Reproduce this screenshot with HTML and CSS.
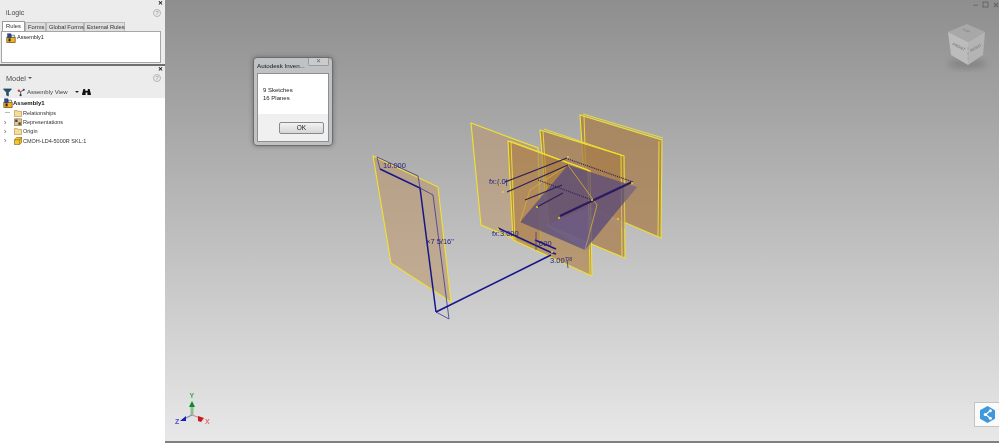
FILE: index.html
```html
<!DOCTYPE html>
<html lang="en">
<head>
<meta charset="utf-8">
<title>iLogic</title>
<link rel="stylesheet" href="styles.css">
</head>
<body>
<svg class="defs" width="0" height="0">
  <symbol id="asm" viewBox="0 0 12 12">
    <rect x="1" y="5" width="10" height="6.500" fill="#f2b21c" stroke="#5a4410" stroke-width=".8"/>
    <rect x="2" y="1" width="4" height="4.500" fill="#2c4a9c" stroke="#1c2c5c" stroke-width=".6"/>
    <rect x="6.500" y="2.500" width="3.500" height="3" fill="#e8e8e8" stroke="#333" stroke-width=".6"/>
    <rect x="3" y="6.500" width="2.500" height="3.500" fill="#222"/>
  </symbol>
  <symbol id="folder" viewBox="0 0 10 10">
    <path d="M.5 2h3.500l1 1h4.500v6.500h-9z" fill="#f6dc98" stroke="#b08a3c" stroke-width=".8"/>
  </symbol>
  <symbol id="rep" viewBox="0 0 10 10">
    <path d="M.5 1h9v8.500h-9z" fill="#e8c680" stroke="#806a3c" stroke-width=".8"/>
    <rect x="1.500" y="2" width="3" height="3" fill="#2c4a9c"/>
    <rect x="5.500" y="5.500" width="3" height="3" fill="#444"/>
  </symbol>
  <symbol id="part" viewBox="0 0 10 10">
    <path d="M.5 3.500l3-3h6v6.500l-2.500 2.500h-6.500z" fill="#f6c62c" stroke="#7a5a10" stroke-width=".8"/>
    <path d="M.5 3.500h6.500v5.500M7 3.500l2.500-3" fill="none" stroke="#7a5a10" stroke-width=".7"/>
  </symbol>
</svg>

<div class="app">
  <aside class="sidebar">
    <section class="ilogic">
      <div class="close-row"><span class="close">✕</span></div>
      <div class="title-row">
        <span class="ilogic-title">iLogic</span>
        <span class="help">?</span>
      </div>
      <div class="tabs">
        <span class="tab tab-active">Rules</span>
        <span class="tab tab-forms">Forms</span>
        <span class="tab tab-global">Global Forms</span>
        <span class="tab tab-external">External Rules</span>
      </div>
      <div class="rules-box">
        <svg class="ico"><use href="#asm"/></svg>
        <span>Assembly1</span>
      </div>
    </section>

    <section class="model">
      <div class="close-row"><span class="close">✕</span></div>
      <div class="title-row model-title-row">
        <span class="model-title">Model <i class="caret"></i></span>
        <span class="help">?</span>
      </div>
      <div class="toolbar">
        <svg class="filter" viewBox="0 0 10 10"><path d="M.5 1h9l-3.500 4v4l-2-1v-3z" fill="#1c5a7c" stroke="#123" stroke-width=".6"/></svg>
        <svg class="view-ico" viewBox="0 0 10 10"><path d="M1 3l3 1v3M4 4l4-2" fill="none" stroke="#555" stroke-width="1"/><circle cx="2" cy="3" r="1.200" fill="#c33"/><circle cx="7.500" cy="2" r="1.200" fill="#447"/><circle cx="4" cy="8" r="1.200" fill="#333"/></svg>
        <span class="view-label">Assembly View</span>
        <i class="caret caret-dark"></i>
        <svg class="binoc" viewBox="0 0 10 9"><path d="M1.500 1h2v2h3v-2h2l1.500 6v1h-4v-3h-2v3h-4v-1z" fill="#111"/></svg>
      </div>
      <div class="tree">
        <div class="tree-row tree-root">
          <svg class="ico"><use href="#asm"/></svg><b>Assembly1</b>
        </div>
        <div class="tree-row"><span class="stub"></span><svg class="ico-small"><use href="#folder"/></svg>Relationships</div>
        <div class="tree-row"><span class="exp">›</span><svg class="ico-small"><use href="#rep"/></svg>Representations</div>
        <div class="tree-row"><span class="exp">›</span><svg class="ico-small"><use href="#folder"/></svg>Origin</div>
        <div class="tree-row"><span class="exp">›</span><svg class="ico-small"><use href="#part"/></svg>CMOH-LD4-5000R SKL:1</div>
      </div>
    </section>
  </aside>

  <main class="viewport">
    <svg class="scene" viewBox="165 0 834 441" width="834" height="441">
      <defs>
        <filter id="soft" x="-30%" y="-30%" width="160%" height="160%"><feGaussianBlur stdDeviation="3"/></filter>
        <filter id="aa"><feGaussianBlur stdDeviation=".35"/></filter>
      </defs>

      <g filter="url(#aa)">
      <!-- left plane -->
      <polygon class="plane" points="373,156 438,187 451,302 391,263"/>

      <!-- back planes -->
      <polygon class="plane plane-b" points="580,115 662,140 661,238 586,206"/>
      <polyline class="edge" points="583,114 663,138"/>
      <polyline class="edge" points="659,141 658,237"/>
      <polyline class="edge" points="584,116 587,205"/>
      <polygon class="plane plane-b" points="540,130 624,156 625,258 548,226"/>
      <polyline class="edge" points="544,129 621,155 622,256"/>
      <polyline class="edge" points="543,131 549,226"/>
      <polygon class="plane plane-a" points="471,123 538,148 541,250 481,225"/>
      <polygon class="plane plane-c" points="508,141 590,171 592,276 513,240"/>
      <polyline class="edge" points="510,141 588,170 590,275"/>
      <polyline class="edge" points="511,142 515,241"/>
      <!-- diamond -->
      <polygon class="diamond" points="568,165 637,187 585,250 520,222"/>
      <polygon class="diamond-right" points="625,182 637,187 608,222 625,229"/>
      <polyline class="edge-thin" points="520,222 530,190 568,165"/>
      <polyline class="edge-thin" points="568,165 597,205 585,250"/>
      <polygon class="diamond-inner" points="545,225 590,207 590,249 585,250"/>

      <!-- left sketch -->
      <polyline class="sk" points="436,312 420,188 380,169"/>
      <polyline class="sk-thin" points="380,169 377,157 418,176 420,188"/>
      <polyline class="sk-thin" points="420,188 433,195 449,319 436,312"/>
      <line class="sk" x1="436" y1="312" x2="551" y2="255"/>

      <!-- centre sketch -->
      <line class="rod" x1="505" y1="182" x2="567" y2="158"/>
      <line class="rod" x1="507" y1="192" x2="568" y2="165"/>
      <line class="rod-dot" x1="568" y1="159" x2="633" y2="182"/>
      <line class="rod-dot" x1="538" y1="180" x2="592" y2="200"/>
      <line class="rod" x1="525" y1="200" x2="562" y2="185"/>
      <line class="rod" x1="537" y1="207" x2="563" y2="193"/>
      <line class="rod-thick" x1="560" y1="216" x2="632" y2="182"/>
      <polyline class="sk" points="498,228 550,252 556,254"/>
      <line class="sk" x1="535" y1="240" x2="556" y2="249"/>
      <line class="sk-thin" x1="536" y1="232" x2="536" y2="250"/>
      <line class="sk-thin" x1="567" y1="260" x2="568" y2="268"/>
      <g class="dots">
        <circle cx="499" cy="185" r="1"/><circle cx="503" cy="192" r="1"/><circle cx="568" cy="157" r="1"/>
        <circle cx="559" cy="218" r="1"/><circle cx="537" cy="207" r="1"/><circle cx="592" cy="200" r="1"/>
        <circle cx="552" cy="252" r="1"/><circle cx="632" cy="183" r="1"/><circle cx="618" cy="219" r="1"/>
        <circle cx="532" cy="262" r="1"/><circle cx="498" cy="229" r="1"/>
      </g>

      <text class="dim" x="383" y="168">10.000</text>
      <text class="dim" x="426" y="244">×7 5/16"</text>
      <text class="dim" x="489" y="184">fx:(.0|</text>
      <text class="dim" x="492" y="236">fx:3.000</text>
      <text class="dim" x="537" y="246">.000</text>
      <text class="dim" x="550" y="263">3.00</text>
      <text class="dim dim-small" x="565" y="261">7/8</text>
      </g>

      <!-- view cube -->
      <ellipse cx="967" cy="64" rx="19" ry="5" fill="#6e6e6e" opacity=".5" filter="url(#soft)"/>
      <g class="cube" filter="url(#aa)">
        <polygon points="948,32 967,24 985,32 968,42" fill="#a8a8a8"/>
        <polygon points="948,32 968,42 968,65 951,55" fill="#bcbcbc"/>
        <polygon points="985,32 968,42 968,65 983,55" fill="#b4b4b4"/>
        <line x1="968" y1="47" x2="968" y2="62" stroke="#999" stroke-width=".7" stroke-dasharray="3 2"/>
        <text class="cube-t" transform="translate(952 45) rotate(26)">FRONT</text>
        <text class="cube-t" transform="translate(971 52) rotate(-28)">RIGHT</text>
        <text class="cube-t" transform="translate(962 30) rotate(22) scale(1 .7)">TOP</text>
      </g>
      <g class="winbtns" filter="url(#aa)">
        <rect x="973" y="4.500" width="5" height="1.500" fill="#777"/>
        <rect x="983" y="2" width="5" height="5" fill="none" stroke="#666" stroke-width="1"/>
        <path d="M994 3l4 4M998 3l-4 4" stroke="#666" stroke-width="1.100"/>
      </g>

      <!-- triad -->
      <g class="triad" filter="url(#aa)">
        <line x1="192" y1="415" x2="192" y2="405" stroke="#8ec08e" stroke-width="3"/>
        <line x1="192" y1="415" x2="184" y2="419" stroke="#7a86b8" stroke-width="1.200"/>
        <line x1="192" y1="415" x2="200" y2="418" stroke="#c09090" stroke-width="1.200"/>
        <polygon points="192,401 195,407 189,407" fill="#0a8a2a"/>
        <polygon points="186,416 186,421 180,421" fill="#1a1ab8"/>
        <polygon points="198,416 204,418 201,422 198,421" fill="#c81c1c"/>
        <text x="189.500" y="398" class="axis axis-y">Y</text>
        <text x="175" y="424" class="axis axis-z">Z</text>
        <text x="205" y="424" class="axis axis-x">X</text>
      </g>
    </svg>

    <div class="dialog">
      <div class="dialog-bar">
        <span class="dialog-title">Autodesk Inven...</span>
        <span class="dialog-close">✕</span>
      </div>
      <div class="dialog-body">
        <div class="dialog-msg">
          <div>9 Sketches</div>
          <div>16 Planes</div>
        </div>
        <div class="dialog-foot"><span class="dialog-ok">OK</span></div>
      </div>
    </div>

    <div class="badge">
      <svg viewBox="0 0 16 18" width="15" height="17">
        <polygon points="8,0 16,4.500 16,13.500 8,18 0,13.500 0,4.500" fill="#3f97dc"/>
        <path d="M11 5L6 9l5 4" fill="none" stroke="#fff" stroke-width="1.300"/>
        <circle cx="11" cy="5" r="1.600" fill="#fff"/><circle cx="5.500" cy="9" r="1.600" fill="#fff"/><circle cx="11" cy="13" r="1.600" fill="#fff"/>
      </svg>
    </div>
  </main>
</div>
</body>
</html>
```

FILE: styles.css
```css
* { box-sizing: border-box; }
html, body { margin: 0; height: 100%; overflow: hidden; }
body { font-family: "Liberation Sans", Arial, sans-serif; font-size: 5.5px; color: #2c2c2c; background: #e6e6e6; }
.defs { position: absolute; }

.app { display: flex; width: 999px; height: 443px; }

.sidebar { width: 165px; flex: none; display: flex; flex-direction: column; background: #fff; filter: blur(.3px); }

.ilogic { height: 66px; flex: none; background: #ececec; border-bottom: 2px solid #707070; }
.close-row { height: 6px; display: flex; justify-content: flex-end; padding-right: 2px; }
.close { font-size: 6px; line-height: 6px; color: #111; font-weight: bold; }
.title-row { display: flex; justify-content: space-between; align-items: center; height: 13px; padding: 0 4px 0 6px; }
.ilogic-title, .model-title { font-size: 7px; color: #4a4a4a; }
.model-title { display: flex; align-items: center; gap: 2px; font-size: 7.300px; }
.help { width: 8px; height: 8px; border: 1px solid #b4b4b4; border-radius: 50%; color: #a8a8a8; font-size: 6px; line-height: 6px; text-align: center; font-weight: bold; }

.tabs { display: flex; height: 10px; padding: 0 0 0 2px; margin-top: 2px; align-items: flex-end; font-size: 5.800px; }
.tab { height: 9px; padding-left: 2px; background: #dedede; border: 1px solid #b8b8b8; border-bottom: 0; white-space: nowrap; color: #333; line-height: 8px; }
.tab-active { width: 23px; height: 10px; background: #fff; border-color: #9a9a9a; padding-left: 3px; }
.tab-forms { width: 21px; }
.tab-global { width: 38px; }
.tab-external { width: 41px; }

.rules-box { display: flex; align-items: flex-start; gap: 1px; margin-left: 1px; width: 160px; height: 32px; padding: 1px 0 0 4px; background: #fff; border: 1px solid #a6a6a6; line-height: 9px; color: #222; }
.ico { width: 10px; height: 10px; flex: none; }
.ico-small { width: 8px; height: 8px; flex: none; margin-right: 1px; }

.model { flex: 1; display: flex; flex-direction: column; }
.model .close-row { background: #ececec; height: 5px; }
.model-title-row { background: #ececec; height: 15px; padding-bottom: 1px; }
.caret { display: inline-block; width: 0; height: 0; border-left: 2px solid transparent; border-right: 2px solid transparent; border-top: 2.500px solid #555; }
.toolbar { height: 12px; background: #ececec; display: flex; align-items: center; padding-left: 3px; }
.filter { width: 9px; height: 9px; margin-right: 5px; }
.view-ico { width: 9px; height: 9px; margin-right: 1px; }
.view-label { font-size: 6px; color: #444; margin-right: 7px; width: 41px; white-space: nowrap; }
.caret-dark { border-top-color: #222; margin-right: 3px; }
.binoc { width: 9px; height: 8px; }

.tree { flex: 1; background: #fff; }
.tree-row { height: 9.400px; display: flex; align-items: center; padding-left: 14px; white-space: nowrap; position: relative; color: #333; }
.tree-root { padding-left: 3px; height: 10px; font-size: 6px; color: #111; }
.tree-root .ico { margin-right: 0; }
.stub { position: absolute; left: 5px; top: 4px; width: 5px; height: 1px; background: #bbb; }
.exp { position: absolute; left: 4px; font-size: 7px; line-height: 7px; color: #555; }

.viewport { flex: 1; position: relative; border-bottom: 2px solid #808080; background: linear-gradient(#8e8e8e, #e8e8e8); }
.scene { position: absolute; left: 0; top: 0; display: block; }

.plane { fill: #bc966c; fill-opacity: .58; stroke: #f2e22c; stroke-width: 1.100; }
.plane-b { fill: #a87c48; fill-opacity: .72; }
.plane-a { fill-opacity: .55; }
.plane-c { fill: #ac7c3c; fill-opacity: .6; }
.edge { fill: none; stroke: #f2e22c; stroke-width: .9; }
.edge-thin { fill: none; stroke: #d8b034; stroke-width: .8; }
.diamond { fill: #58497e; fill-opacity: .74; }
.diamond-right { fill: #b09080; fill-opacity: .35; }
.diamond-inner { fill: #6e6ab0; fill-opacity: .25; }
.sk { stroke: #17178c; stroke-width: 1.500; fill: none; }
.sk-thin { stroke: #3a3a8c; stroke-width: .8; fill: none; }
.rod { stroke: #2c1f5c; stroke-width: 1.300; }
.rod-dot { stroke: #2c1f5c; stroke-width: 1.200; stroke-dasharray: 1 1; }
.rod-thick { stroke: #2a1a60; stroke-width: 2.200; }
.dots { fill: #f0d020; }
.dim { font-size: 7.500px; fill: #1f1f80; }
.dim-small { font-size: 5px; }

.cube-t { font-size: 4px; fill: #858585; font-weight: bold; }
.axis { font-size: 7px; font-weight: bold; }
.axis-y { fill: #35b050; }
.axis-z { fill: #4a4ae0; }
.axis-x { fill: #f06a6a; }

.dialog { position: absolute; left: 88px; top: 57px; width: 80px; height: 89px; padding: 0 3px 3px; border: 1px solid #6d6d6d; border-radius: 4px; background: #bfc2c4; box-shadow: 0 0 4px rgba(60,60,60,.5); display: flex; flex-direction: column; filter: blur(.25px); }
.dialog-bar { height: 15px; flex: none; display: flex; justify-content: space-between; align-items: center; }
.dialog-title { font-size: 6.200px; color: #111; white-space: nowrap; }
.dialog-close { width: 21px; height: 8px; margin-top: -7px; background: #c9cbcd; border: 1px solid #9b9b9b; border-top: 0; border-radius: 0 0 2px 2px; text-align: center; font-size: 6px; line-height: 7px; color: #666; }
.dialog-body { flex: 1; background: #fff; display: flex; flex-direction: column; border: 1px solid #8f8f8f; }
.dialog-msg { flex: 1; padding: 12px 0 0 5px; font-size: 6px; line-height: 8px; color: #222; }
.dialog-foot { height: 27px; flex: none; background: #f0f0f0; padding: 8px 4px 0 0; display: flex; justify-content: flex-end; }
.dialog-ok { width: 45px; height: 12px; background: linear-gradient(#f2f2f2, #d6d6d6); border: 1px solid #8a8a8a; border-radius: 2px; text-align: center; font-size: 6.500px; line-height: 10px; color: #222; }

.badge { position: absolute; right: 0; bottom: 14px; width: 25px; height: 25px; background: #fafafa; border: 1px solid #c4c4c4; border-right: 0; display: flex; align-items: center; justify-content: center; }
```
